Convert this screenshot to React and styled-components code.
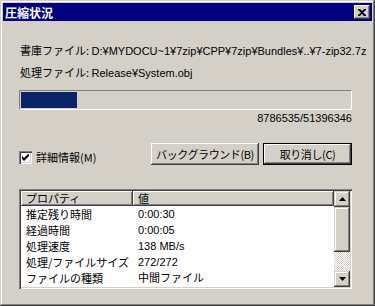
import React from 'react'
import styled, { createGlobalStyle } from 'styled-components'

const Global = createGlobalStyle`
  html, body {
    margin: 0;
    padding: 0;
    background: #d4d0c8;
  }
  body {
    font-family: "Liberation Sans", "Noto Sans CJK JP", sans-serif;
    font-size: 11px;
    color: #000;
  }
`

const face = '#d4d0c8'
const shadow = '#808080'
const dark = '#404040'

const Window = styled.div`
  box-sizing: border-box;
  width: 375px;
  height: 306px;
  padding: 3px;
  background: ${face};
  box-shadow: inset -1px -1px 0 ${dark}, inset 1px 1px 0 ${face},
    inset -2px -2px 0 ${shadow}, inset 2px 2px 0 #fff;
  display: flex;
  flex-direction: column;
  overflow: hidden;
`

const TitleBar = styled.div`
  height: 18px;
  flex-shrink: 0;
  background: #000080;
  color: #fff;
  display: flex;
  align-items: center;
  justify-content: space-between;
  padding: 0 2px 0 2px;
  font-family: "Noto Sans CJK JP", sans-serif;
  font-weight: bold;
  font-size: 12px;
`

const CloseButton = styled.div`
  width: 16px;
  height: 14px;
  box-sizing: border-box;
  background: ${face};
  box-shadow: inset -1px -1px 0 ${dark}, inset 1px 1px 0 #fff,
    inset -2px -2px 0 ${shadow};
  display: flex;
  align-items: center;
  justify-content: center;
`

const Body = styled.div`
  padding: 21px 0 0 16px;
  width: 333px;
  display: flex;
  flex-direction: column;
`

const InfoLine = styled.div`
  line-height: 16px;
  height: 16px;
  white-space: nowrap;
  margin-left: 1px;
  margin-bottom: ${p => p.$gap || 0}px;
`

const Label = styled.span`
  font-family: "Noto Sans CJK JP", sans-serif;
`

const Progress = styled.div`
  margin-top: 10px;
  height: 20px;
  box-sizing: border-box;
  padding: 2px;
  border-top: 1px solid ${shadow};
  border-left: 1px solid ${shadow};
  border-bottom: 1px solid #fff;
  border-right: 1px solid #fff;
`

const Fill = styled.div`
  height: 16px;
  margin-top: -1px;
  margin-left: -1px;
  background: #0a246a;
`

const Count = styled.div`
  text-align: right;
  line-height: 14px;
  margin-top: 1px;
`

const Controls = styled.div`
  display: flex;
  align-items: flex-start;
  margin-top: 18px;
`

const CheckGroup = styled.label`
  display: flex;
  align-items: center;
  gap: 4px;
  margin-top: 6px;
  margin-right: auto;
`

const CheckBox = styled.span`
  width: 13px;
  height: 13px;
  box-sizing: border-box;
  background: #fff;
  box-shadow: inset 1px 1px 0 ${shadow}, inset 2px 2px 0 ${dark},
    inset -1px -1px 0 #fff, inset -2px -2px 0 ${face};
  display: flex;
  align-items: center;
  justify-content: center;
`

const Button = styled.div`
  height: 22px;
  width: ${p => p.$w}px;
  flex-shrink: 0;
  box-sizing: border-box;
  margin-left: ${p => p.$ml || 0}px;
  display: flex;
  align-items: center;
  justify-content: center;
  white-space: nowrap;
  letter-spacing: -0.4px;
  background: ${face};
  font-family: "Noto Sans CJK JP", sans-serif;
  box-shadow: ${p => p.$default
    ? `inset 0 0 0 1px #000, inset -2px -2px 0 ${dark}, inset 2px 2px 0 #fff, inset -3px -3px 0 ${shadow}`
    : `inset -1px -1px 0 ${dark}, inset 1px 1px 0 #fff, inset -2px -2px 0 ${shadow}`};
`

const List = styled.div`
  margin-top: 24px;
  height: 100px;
  box-sizing: border-box;
  padding: 2px;
  background: #fff;
  box-shadow: inset 1px 1px 0 ${shadow}, inset 2px 2px 0 ${dark},
    inset -1px -1px 0 #fff, inset -2px -2px 0 ${face};
  display: flex;
  overflow: hidden;
`

const Table = styled.div`
  flex: 1;
  display: flex;
  flex-direction: column;
  overflow: hidden;
`

const Header = styled.div`
  display: flex;
  height: 15px;
  flex-shrink: 0;
`

const HeaderCell = styled.div`
  width: ${p => p.$w ? `${p.$w}px` : 'auto'};
  flex: ${p => p.$w ? 'none' : 1};
  box-sizing: border-box;
  background: ${face};
  padding-left: 5px;
  line-height: 15px;
  font-family: "Noto Sans CJK JP", sans-serif;
  box-shadow: inset -1px -1px 0 ${dark}, inset 1px 1px 0 #fff,
    inset -2px -2px 0 ${shadow};
`

const Row = styled.div`
  display: flex;
  height: 16px;
  line-height: 16px;
  flex-shrink: 0;
  white-space: nowrap;
`

const Cell = styled.div`
  width: ${p => p.$w ? `${p.$w}px` : 'auto'};
  flex: ${p => p.$w ? 'none' : 1};
  padding-left: 5px;
  box-sizing: border-box;
  overflow: hidden;
`

const ScrollBar = styled.div`
  width: 16px;
  display: flex;
  flex-direction: column;
  background-color: #fff;
  background-image: repeating-conic-gradient(${face} 0 25%, #fff 0 50%);
  background-size: 2px 2px;
`

const ScrollBtn = styled.div`
  height: ${p => p.$h}px;
  flex-shrink: 0;
  background: ${face};
  box-shadow: inset -1px -1px 0 ${dark}, inset 1px 1px 0 ${face},
    inset -2px -2px 0 ${shadow}, inset 2px 2px 0 #fff;
  display: flex;
  align-items: center;
  justify-content: center;
  margin-top: ${p => p.$push ? 'auto' : 0};
`

const rows = [
  ['推定残り時間', '0:00:30'],
  ['経過時間', '0:00:05'],
  ['処理速度', '138 MB/s'],
  ['処理/ファイルサイズ', '272/272'],
  ['ファイルの種類', '中間ファイル'],
]

const done = 8786535
const total = 51396346

export default function App() {
  return (
    <>
      <Global />
      <Window>
        <TitleBar>
          <span>圧縮状況</span>
          <CloseButton>
            <svg width="8" height="7" viewBox="0 0 8 7">
              <path d="M0 0h2l2 2 2-2h2v1L5 3.5 8 6v1H6L4 5 2 7H0V6l3-2.5L0 1z" fill="#000" />
            </svg>
          </CloseButton>
        </TitleBar>
        <Body>
          <InfoLine $gap={6}>
            <Label>書庫ファイル: </Label>D:¥MYDOCU~1¥7zip¥CPP¥7zip¥Bundles¥..¥7-zip32.7z
          </InfoLine>
          <InfoLine>
            <Label>処理ファイル: </Label>Release¥System.obj
          </InfoLine>
          <Progress>
            <Fill style={{ width: `${(done / total) * 329}px` }} />
          </Progress>
          <Count>{done}/{total}</Count>
          <Controls>
            <CheckGroup>
              <CheckBox>
                <svg width="7" height="7" viewBox="0 0 7 7">
                  <path d="M0 2v3l2 2 5-5V-1L2 4z" fill="#000" />
                </svg>
              </CheckBox>
              <Label>詳細情報(M)</Label>
            </CheckGroup>
            <Button $w={108}>バックグラウンド(B)</Button>
            <Button $w={89} $ml={4} $default>取り消し(C)</Button>
          </Controls>
          <List>
            <Table>
              <Header>
                <HeaderCell $w={112}>プロパティ</HeaderCell>
                <HeaderCell>値</HeaderCell>
              </Header>
              {rows.map(([k, v]) => (
                <Row key={k}>
                  <Cell $w={112}><Label>{k}</Label></Cell>
                  <Cell>{v}</Cell>
                </Row>
              ))}
            </Table>
            <ScrollBar>
              <ScrollBtn $h={16}>
                <svg width="7" height="4" viewBox="0 0 7 4"><path d="M3.5 0L7 4H0z" fill="#000" /></svg>
              </ScrollBtn>
              <ScrollBtn $h={45} />
              <ScrollBtn $h={16} $push>
                <svg width="7" height="4" viewBox="0 0 7 4"><path d="M0 0h7L3.5 4z" fill="#000" /></svg>
              </ScrollBtn>
            </ScrollBar>
          </List>
        </Body>
      </Window>
    </>
  )
}
